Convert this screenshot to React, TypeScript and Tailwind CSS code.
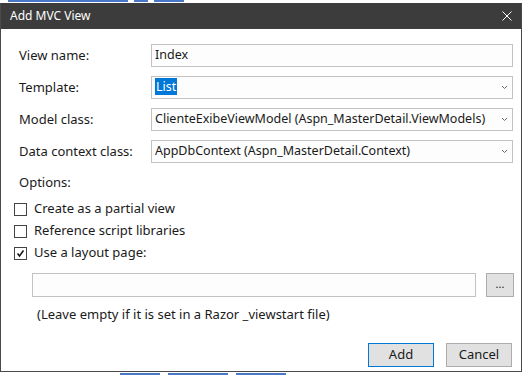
const Chevron = () => (
  <svg width="7" height="5" viewBox="0 0 7 5" className="shrink-0">
    <path d="M1 1 L3.5 3.5 L6 1" fill="none" stroke="#666" strokeWidth="1" />
  </svg>
);

const Field = ({ label, children, select }: { label: string; children: React.ReactNode; select?: boolean }) => (
  <div className="flex items-center h-[23px]">
    <div className="w-[150px] shrink-0 pl-[18px] text-[13px]">{label}</div>
    <div className="flex items-center w-[362px] h-[23px] border border-[#c3c3c3] bg-[#fdfdfd] pl-[3px] pr-[4px]">
      <div className="flex-1 text-[12.5px] whitespace-nowrap overflow-hidden">{children}</div>
      {select && <Chevron />}
    </div>
  </div>
);

const Check = ({ label, checked }: { label: string; checked?: boolean }) => (
  <div className="flex items-center h-[22px] pl-[13px]">
    <div className="w-[13px] h-[13px] border border-[#444] bg-white flex items-center justify-center">
      {checked && (
        <svg width="9" height="9" viewBox="0 0 9 9">
          <path d="M1.5 4.5 L3.5 7 L7.5 1.5" fill="none" stroke="#111" strokeWidth="1.5" />
        </svg>
      )}
    </div>
    <span className="ml-[7px] text-[13px]">{label}</span>
  </div>
);

export default function App() {
  return (
    <div className="w-[525px] h-[375px] overflow-hidden bg-white text-[#1a1a1a] font-['Noto_Sans',sans-serif]">
      <div className="h-[3px] flex items-start gap-[6px] pl-[8px]">
        <div className="w-[120px] h-[2px] bg-[#4a78c8]" />
        <div className="w-[14px] h-[2px] bg-[#4a78c8]" />
        <div className="w-[30px] h-[2px] bg-[#4a78c8]" />
      </div>
      <div className="w-[522px] h-[369px] border-x border-b border-[#4a4a4a] flex flex-col">
        <div className="h-[26px] bg-[#3c3c3c] flex items-center justify-between pl-[9px] pr-[9px]">
          <span className="text-white text-[12px]">Add MVC View</span>
          <svg width="10" height="10" viewBox="0 0 10 10">
            <path d="M0.5 0.5 L9.5 9.5 M9.5 0.5 L0.5 9.5" stroke="#fff" strokeWidth="1" />
          </svg>
        </div>
        <div className="flex-1 flex flex-col pt-[15px]">
          <div className="flex flex-col gap-[9px]">
            <Field label="View name:">Index</Field>
            <Field label="Template:" select>
              <span className="bg-[#0078d7] text-white px-[1px]">List</span>
            </Field>
            <Field label="Model class:" select>
              ClienteExibeViewModel (Aspn_MasterDetail.ViewModels)
            </Field>
            <Field label="Data context class:" select>
              AppDbContext (Aspn_MasterDetail.Context)
            </Field>
          </div>
          <div className="mt-[11px] h-[18px] pl-[18px] text-[13px] flex items-center">Options:</div>
          <div className="mt-[6px] flex flex-col">
            <Check label="Create as a partial view" />
            <Check label="Reference script libraries" />
            <Check label="Use a layout page:" checked />
          </div>
          <div className="mt-[9px] flex items-center pl-[31px] gap-[10px]">
            <div className="w-[444px] h-[24px] border border-[#c3c3c3] bg-[#fdfdfd]" />
            <div className="w-[28px] h-[24px] border border-[#adadad] bg-[#e1e1e1] flex items-center justify-center text-[11px] leading-none pb-[3px]">
              ...
            </div>
          </div>
          <div className="mt-[9px] h-[18px] pl-[36px] text-[13px] flex items-center">
            (Leave empty if it is set in a Razor _viewstart file)
          </div>
          <div className="mt-[19px] flex justify-end gap-[12px] pr-[9px]">
            <div className="w-[66px] h-[24px] border border-[#0078d7] bg-[#e1e1e1] flex items-center justify-center text-[13px]">
              Add
            </div>
            <div className="w-[66px] h-[24px] border border-[#adadad] bg-[#e1e1e1] flex items-center justify-center text-[13px]">
              Cancel
            </div>
          </div>
        </div>
      </div>
      <div className="h-[3px] flex items-end gap-[8px] pl-[120px]">
        <div className="w-[40px] h-[2px] bg-[#4a78c8]" />
        <div className="w-[60px] h-[2px] bg-[#4a78c8]" />
        <div className="w-[50px] h-[2px] bg-[#4a78c8]" />
      </div>
    </div>
  );
}
